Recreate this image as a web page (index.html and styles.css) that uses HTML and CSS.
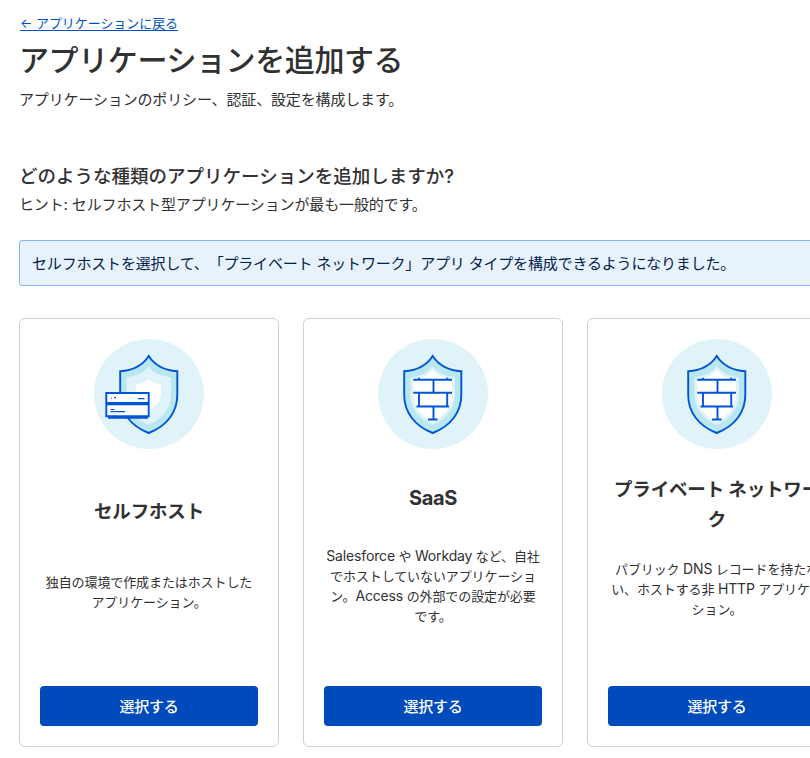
FILE: index.html
```html
<!DOCTYPE html>
<html lang="ja">
<head>
<meta charset="utf-8">
<title>アプリケーションを追加する</title>
<link rel="stylesheet" href="styles.css">
</head>
<body>
<svg class="defs" aria-hidden="true">
  <symbol id="shield" viewBox="0 0 110 110">
    <path d="M54.7 17C60.5 26 70 31.4 83.3 32.2V56C83.3 73 73 87 54.7 94C36.5 87 26.2 73 26.2 56V32.2C39.5 31.4 49 26 54.7 17Z" fill="#b9e7f1" stroke="#0055d6" stroke-width="1.9"/>
  </symbol>
  <symbol id="wall" viewBox="0 0 110 110">
    <use href="#shield"/>
    <path d="M54.7 27C59.5 33.5 67 37 77 38.5V56C77 69 69 80 54.7 86C40.5 80 32.5 69 32.5 56V38.5C42.5 37 50 33.5 54.7 27Z" fill="#dff3f9"/>
    <path d="M54.7 31C59 36 65 39 74 40V56C74 67 67 77 54.7 83C42.5 77 35.5 67 35.5 56V40C44.5 39 50.5 36 54.7 31Z" fill="#fff"/>
    <path d="M35.3 40.7H74M35.3 53.7H74M38.5 67.5H71M50 80.5H59.5M55.5 40.7V53.7M41 53.7V67.5M69.2 53.7V67.5M55.5 67.5V80.5M41 38.7V40.7M69.2 38.7V40.7" fill="none" stroke="#0055d6" stroke-width="1.9"/>
  </symbol>
</svg>
<main class="page">
  <a class="back" href="#">← アプリケーションに戻る</a>
  <h1 class="title">アプリケーションを追加する</h1>
  <p class="lead">アプリケーションのポリシー、認証、設定を構成します。</p>
  <h2 class="question">どのような種類のアプリケーションを追加しますか?</h2>
  <p class="hint">ヒント: セルフホスト型アプリケーションが最も一般的です。</p>
  <div class="notice">セルフホストを選択して、「プライベート ネットワーク」アプリ タイプを構成できるようになりました。</div>
  <div class="cards">
    <section class="card">
      <svg class="icon" viewBox="0 0 110 110">
        <circle cx="55" cy="55" r="55" fill="#dff3f9"/>
        <use href="#shield"/>
        <path d="M54.7 27.5C59.5 33.5 67 37 77 38.5V56C77 69 69 80 54.7 86C40.5 80 32.5 69 32.5 56V38.5C42.5 37 50 33.5 54.7 27.5Z" fill="#dff3f9"/>
        <path d="M54.7 40C58 43 62 45 67 45.5V54C67 62 63 67 54.7 71C46 67 42 62 42 54V45.5C47 45 51.5 43 54.7 40Z" fill="#fff"/>
        <path d="M14 78.6H54" stroke="#0055d6" stroke-width="2.2"/>
        <path d="M12.3 54H54.7V64H12.3ZM12.3 65.3H54.7V77.3H12.3Z" fill="#fff" stroke="#0055d6" stroke-width="1.9"/>
        <path d="M17 59H18M20 58.7H22M44 59.7H50.5M16.5 70.5H20.5M16.5 72.6H31" stroke="#0055d6" stroke-width="1.2"/>
      </svg>
      <div class="body body-short">
        <h3>セルフホスト</h3>
        <p>独自の環境で作成またはホストしたアプリケーション。</p>
      </div>
      <button class="select">選択する</button>
    </section>
    <section class="card">
      <svg class="icon" viewBox="0 0 110 110"><circle cx="55" cy="55" r="55" fill="#dff3f9"/><use href="#wall"/></svg>
      <div class="body">
        <h3><span class="latin">SaaS</span></h3>
        <p><span class="latin">Salesforce</span> や <span class="latin">Workday</span> など、自社<br>でホストしていないアプリケーショ<br>ン。<span class="latin">Access</span> の外部での設定が必要<br>です。</p>
      </div>
      <button class="select">選択する</button>
    </section>
    <section class="card">
      <svg class="icon" viewBox="0 0 110 110"><circle cx="55" cy="55" r="55" fill="#dff3f9"/><use href="#wall"/></svg>
      <div class="body body-raised">
        <h3>プライベート ネットワー<br>ク</h3>
        <p>パブリック <span class="latin">DNS</span> レコードを持たな<br>い、ホストする非 <span class="latin">HTTP</span> アプリケー<br>ション。</p>
      </div>
      <button class="select">選択する</button>
    </section>
  </div>
</main>
</body>
</html>
```
FILE: styles.css
```css
* { box-sizing: border-box; }
body {
  margin: 0;
  width: 810px;
  height: 758px;
  overflow: hidden;
  background: #fff;
  color: #313131;
  font-family: Inter, "Noto Sans CJK JP", sans-serif;
  font-size: 15px;
  text-spacing-trim: space-all;
}
h1, h2, h3, p { margin: 0; }
.defs { display: block; width: 0; height: 0; }
.page { width: 1112px; padding: 13px 0 0 19px; }
.back {
  display: block;
  width: max-content;
  margin-left: 1px;
  color: #0051c3;
  font-size: 13px;
  line-height: 20px;
  letter-spacing: -0.06px;
  text-underline-offset: 2px;
}
.title { margin-top: 7px; font-size: 30px; font-weight: 500; line-height: 40px; letter-spacing: -0.4px; }
.lead { margin-top: 10px; line-height: 20px; letter-spacing: -0.15px; }
.question { margin-top: 53px; font-size: 18.5px; font-weight: 500; line-height: 26px; letter-spacing: 0; }
.hint { margin-top: 6px; line-height: 20px; letter-spacing: -0.14px; }
.notice {
  height: 46px;
  margin-top: 25px;
  padding: 0 12px;
  border: 1px solid #82b6ff;
  border-radius: 3px;
  background: #e8f2fd;
  color: #00204e;
  line-height: 45px;
  letter-spacing: -0.18px;
}
.cards { display: flex; gap: 24px; margin-top: 32px; }
.card {
  display: flex;
  flex: none;
  flex-direction: column;
  width: 260px;
  height: 429px;
  padding: 20px;
  border: 1px solid #d0d0d0;
  border-radius: 6px;
  text-align: center;
}
.icon { display: block; width: 110px; height: 110px; margin: 0 auto; }
.body { display: flex; flex-direction: column; justify-content: space-evenly; height: 211px; }
.body-short { height: 210px; }
.body-raised { height: 195px; }
.body h3 { font-size: 18.5px; font-weight: 700; line-height: 30px; letter-spacing: -0.15px; white-space: nowrap; }
.body p { font-size: 13px; line-height: 20px; letter-spacing: -0.1px; }
.body h3 .latin { font-size: 20px; line-height: 1; letter-spacing: -0.4px; }
.body p .latin { font-size: 14px; line-height: 1; letter-spacing: -0.15px; }
.select {
  width: 218px;
  height: 40px;
  margin: auto 0 0;
  padding: 0 0 2px;
  border: 0;
  border-radius: 4px;
  background: #004bbb;
  color: #fff;
  font: inherit;
  font-weight: 500;
  letter-spacing: -0.25px;
}
```
